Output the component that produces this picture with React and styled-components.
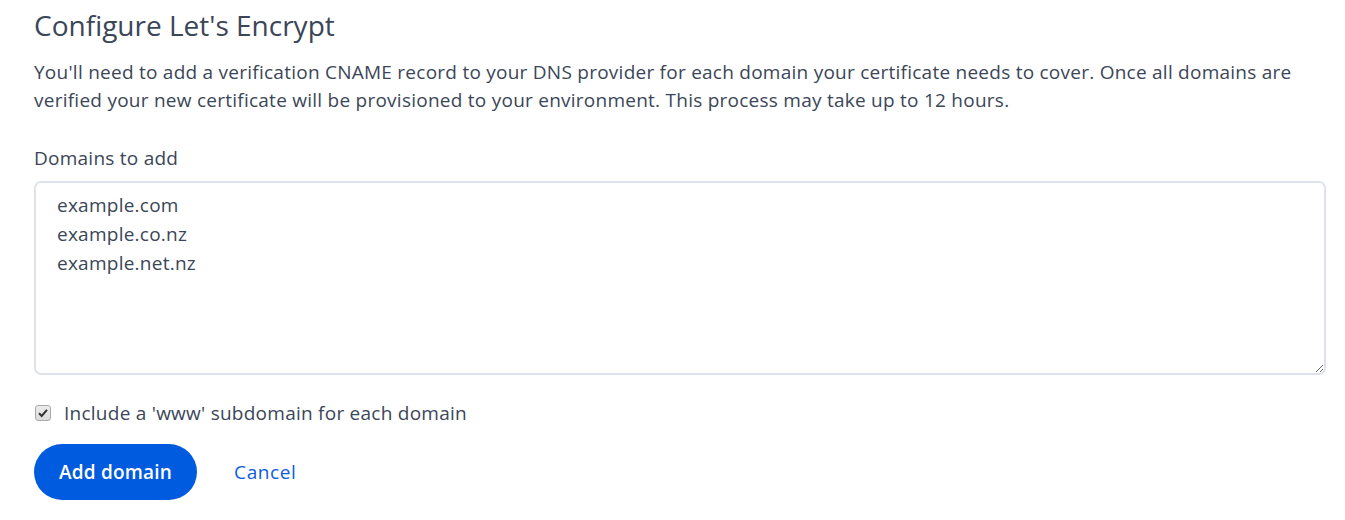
import React from "react";
import styled, { createGlobalStyle } from "styled-components";

const Global = createGlobalStyle`
  html, body { margin: 0; padding: 0; background: #fff; }
  body { font-family: "Open Sans", "Liberation Sans", sans-serif; color: #3b4658; }
  * { box-sizing: border-box; }
`;

const Page = styled.div`
  padding: 8px 19px 0 34px;
  display: flex;
  flex-direction: column;
`;

const Title = styled.h1`
  margin: 0;
  font-size: 28px;
  line-height: 34px;
  font-weight: 400;
  letter-spacing: 0;
  color: #3b4658;
`;

const Intro = styled.p`
  margin: 16px 0 0;
  font-size: 19px;
  letter-spacing: 0.25px;
  line-height: 28px;
  color: #3b4658;
`;

const Label = styled.label`
  margin-top: 30px;
  font-size: 19px;
  letter-spacing: 0.25px;
  line-height: 28px;
  display: block;
`;

const Area = styled.textarea`
  margin-top: 9px;
  width: 100%;
  height: 194px;
  border: 2px solid #dfe2ec;
  border-radius: 7px;
  padding: 8px 21px;
  font-family: inherit;
  font-size: 19px;
  letter-spacing: 0.25px;
  line-height: 29px;
  color: #3b4658;
  resize: vertical;
  outline: none;
  display: block;
`;

const CheckRow = styled.label`
  margin-top: 25px;
  display: flex;
  align-items: center;
  gap: 13px;
  font-size: 19px;
  letter-spacing: 0.25px;
  line-height: 26px;
  cursor: pointer;
`;

const Box = styled.span`
  width: 16px;
  height: 16px;
  margin-left: 1px;
  border: 1px solid #a9a9a9;
  border-radius: 3px;
  background: linear-gradient(#ececec, #dcdcdc);
  display: flex;
  align-items: center;
  justify-content: center;
`;

const Actions = styled.div`
  margin-top: 18px;
  display: flex;
  align-items: center;
  gap: 37px;
`;

const Primary = styled.button`
  height: 56px;
  padding: 0 25px;
  border: none;
  border-radius: 28px;
  background: #015bdf;
  color: #fff;
  font-family: inherit;
  font-size: 19px;
  letter-spacing: 0.2px;
  font-weight: 600;
  cursor: pointer;
`;

const LinkButton = styled.button`
  border: none;
  background: none;
  padding: 0;
  color: #0b5ce0;
  font-family: inherit;
  font-size: 19px;
  letter-spacing: 0.6px;
  cursor: pointer;
`;

export default function App() {
  return (
    <>
      <Global />
      <Page>
        <Title>Configure Let's Encrypt</Title>
        <Intro>
          You'll need to add a verification CNAME record to your DNS provider for each domain your certificate needs to cover. Once all domains are verified your new certificate will be provisioned to your environment. This process may take up to 12 hours.
        </Intro>
        <Label htmlFor="domains">Domains to add</Label>
        <Area id="domains" defaultValue={"example.com\nexample.co.nz\nexample.net.nz"} />
        <CheckRow>
          <Box>
            <svg width="12" height="12" viewBox="0 0 12 12">
              <path d="M2 6.3 L4.7 9 L10 2.8" fill="none" stroke="#333" strokeWidth="2" />
            </svg>
          </Box>
          Include a 'www' subdomain for each domain
        </CheckRow>
        <Actions>
          <Primary>Add domain</Primary>
          <LinkButton>Cancel</LinkButton>
        </Actions>
      </Page>
    </>
  );
}
